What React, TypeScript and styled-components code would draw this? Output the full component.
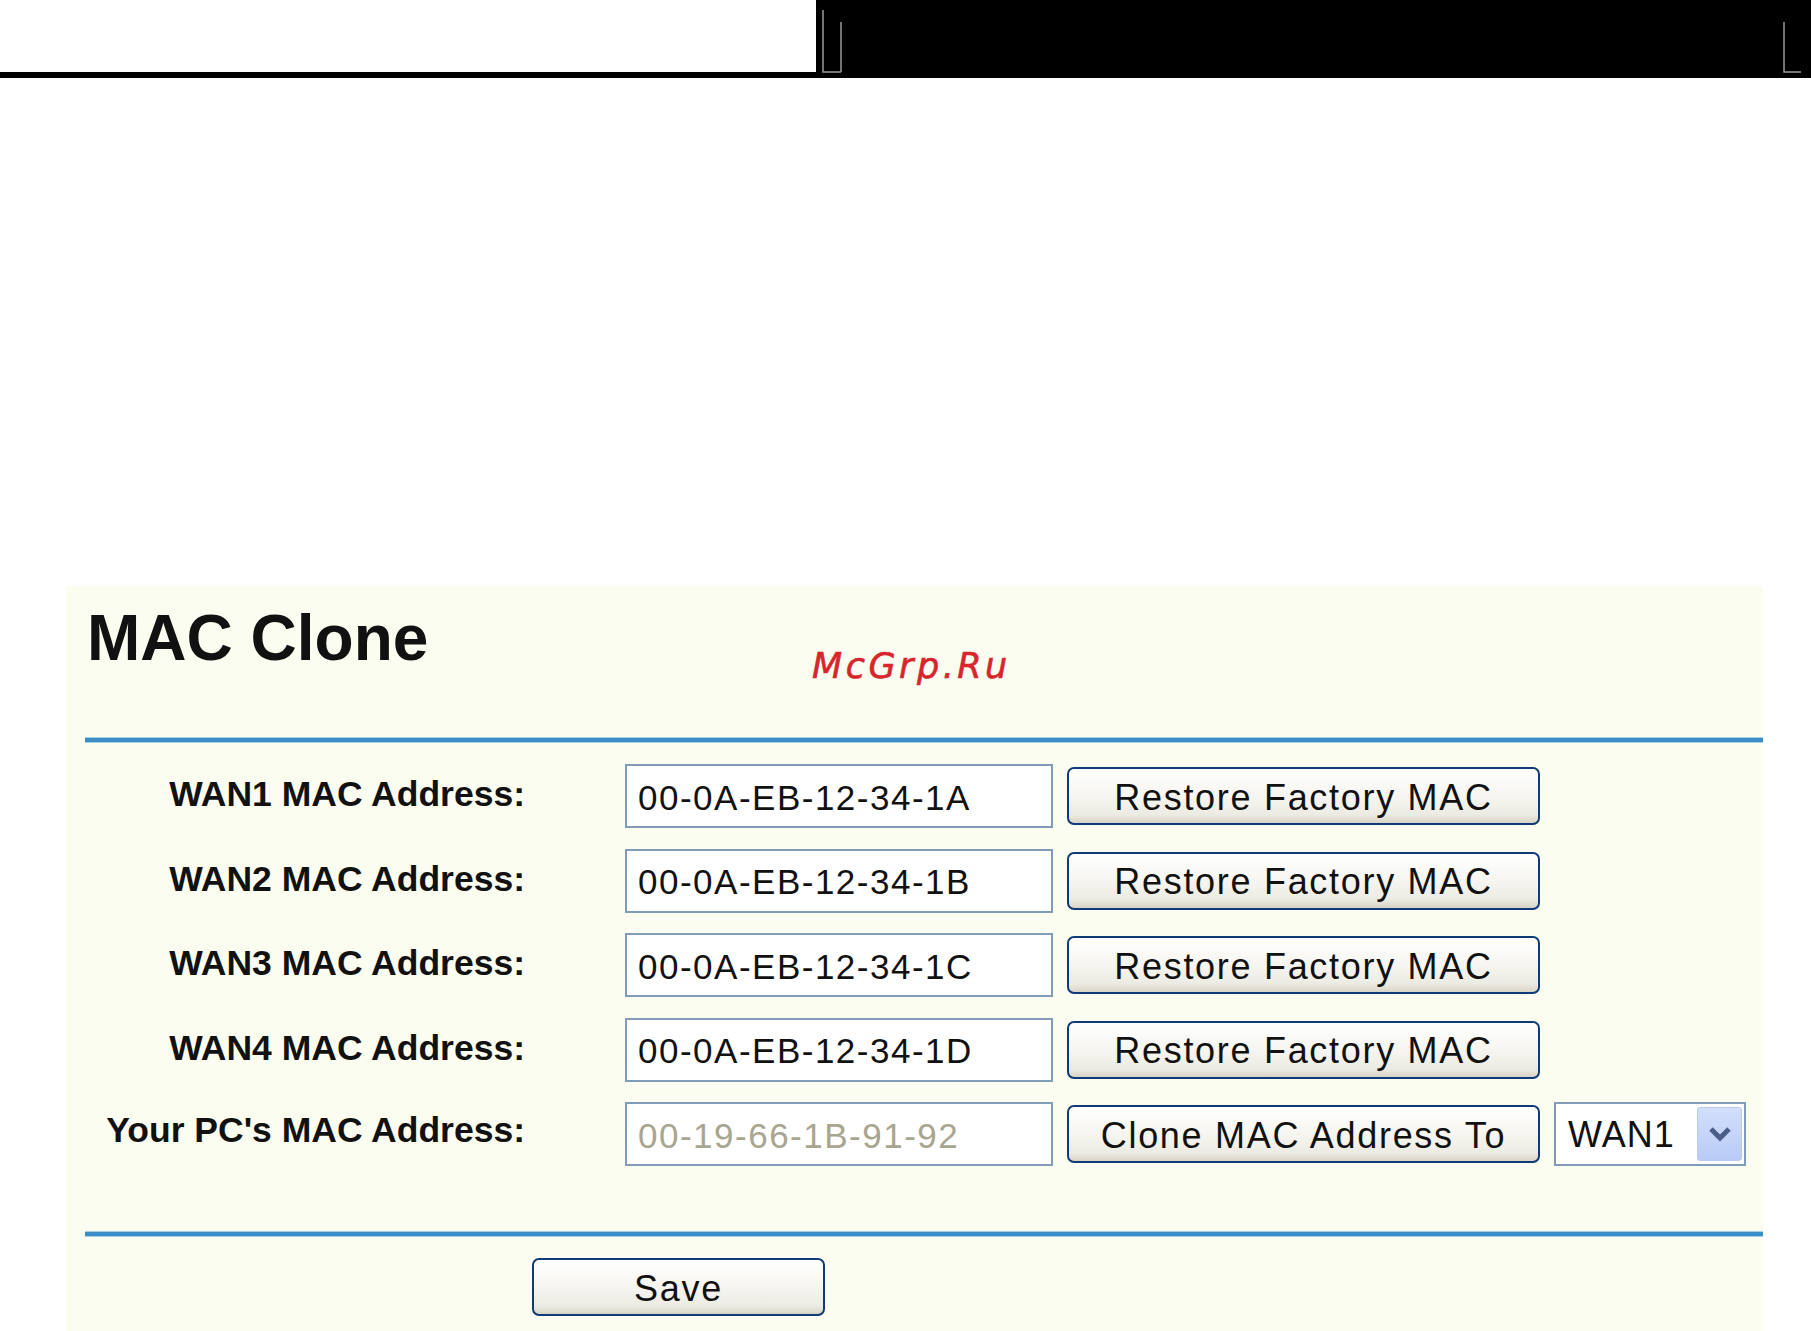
import * as React from 'react';

import styled, { createGlobalStyle } from 'styled-components';

const GlobalStyle = createGlobalStyle`
  html, body {
    margin: 0;
    padding: 0;
    background: #ffffff;
  }
  body {
    width: 1811px;
    height: 1331px;
    overflow: hidden;
    font-family: "Liberation Sans", Arial, sans-serif;
  }
`;

const Header = styled.header`
  display: flex;
  height: 78px;
  background: #000000;
`;

const PageBlank = styled.div`
  width: 816px;
  height: 72px;
  background: #ffffff;
`;

const HeaderBar = styled.div`
  flex: 1;
  display: flex;
`;

const Panel = styled.section`
  position: relative;
  display: flex;
  flex-direction: column;
  margin: 508px 0 0 66px;
  width: 1697px;
  height: 745px;
  padding-top: 20px;
  box-sizing: border-box;
  background: #fbfdf1;
`;

const Title = styled.h1`
  margin: 0 0 0 21px;
  font-size: 64px;
  line-height: 64px;
  font-weight: bold;
  color: #111111;
`;

const Watermark = styled.span`
  position: absolute;
  left: 746px;
  top: 62px;
  font-family: "DejaVu Sans", sans-serif;
  font-style: italic;
  font-size: 35px;
  line-height: 36px;
  letter-spacing: 3.5px;
  color: #d8252b;
  -webkit-text-stroke: 0.6px #d8252b;
`;

const Rule = styled.div<{ $top: number }>`
  margin: ${(p) => p.$top}px 0 0 19px;
  height: 4px;
  background: #3b8ec6;
  border-top: 1px solid #a7cfe8;
  border-bottom: 1px solid #a7cfe8;
`;

const Form = styled.div`
  display: grid;
  grid-template-columns: 545px 428px 473px 192px;
  grid-auto-rows: 64px;
  column-gap: 14px;
  row-gap: 20.5px;
  margin-top: 21px;
`;

const Label = styled.div<{ $lift: number }>`
  align-self: center;
  padding: 0 86px ${(p) => p.$lift}px 0;
  text-align: right;
  font-size: 35.5px;
  line-height: 36px;
  font-weight: bold;
  color: #111111;
  white-space: nowrap;
`;

const TextBox = styled.div<{ $disabled?: boolean }>`
  display: flex;
  align-items: center;
  box-sizing: border-box;
  height: 64px;
  padding: 3px 11px 0;
  border: 2px solid #7f9db9;
  background: #ffffff;
  font-size: 35px;
  letter-spacing: 1.5px;
  color: ${(p) => (p.$disabled ? '#a8a591' : '#111111')};
  white-space: nowrap;
`;

const XpButton = styled.button<{ $width?: number }>`
  align-self: center;
  box-sizing: border-box;
  width: ${(p) => (p.$width ? `${p.$width}px` : '100%')};
  height: 58px;
  padding: 3px 0 0;
  border: 2px solid #0f3c78;
  border-radius: 7px;
  background: linear-gradient(#ffffff 0%, #f7f6f1 45%, #ecebe3 85%, #d8d3c6 100%);
  font-family: "Liberation Sans", Arial, sans-serif;
  font-size: 36px;
  letter-spacing: 1.7px;
  color: #111111;
  white-space: nowrap;
`;

const SelectBox = styled.div`
  display: flex;
  align-items: center;
  justify-content: space-between;
  box-sizing: border-box;
  height: 64px;
  padding: 2px 2px 0 12px;
  border: 2px solid #7f9db9;
  background: #ffffff;
  font-size: 36px;
  letter-spacing: 1px;
  color: #111111;
`;

const DropButton = styled.span`
  display: flex;
  align-items: center;
  justify-content: center;
  width: 45px;
  height: 54px;
  margin-top: -2px;
  border: 1px solid #b9c9ef;
  border-radius: 3px;
  box-sizing: border-box;
  background: linear-gradient(#d3dffb, #b9cbf6);
`;

const SaveRow = styled.div`
  margin: 21px 0 0 466px;
`;

const rows = [
  { label: 'WAN1 MAC Address:', value: '00-0A-EB-12-34-1A' },
  { label: 'WAN2 MAC Address:', value: '00-0A-EB-12-34-1B' },
  { label: 'WAN3 MAC Address:', value: '00-0A-EB-12-34-1C' },
  { label: 'WAN4 MAC Address:', value: '00-0A-EB-12-34-1D' },
];

const HeaderLines = () => (
  <svg width="995" height="78" viewBox="0 0 995 78">
    <g stroke="#9a9a9a" strokeWidth="1.5" fill="none">
      <path d="M7 10 V72 H25" />
      <path d="M25 22 V72" />
      <path d="M968 22 V72 H985" />
    </g>
  </svg>
);

const Chevron = () => (
  <svg width="24" height="16" viewBox="0 0 24 16">
    <polyline
      points="3,3 12,12 21,3"
      fill="none"
      stroke="#4a5e88"
      strokeWidth="5"
      strokeLinejoin="miter"
    />
  </svg>
);

export default function App() {
  return (
    <>
      <GlobalStyle />
      <Header>
        <PageBlank />
        <HeaderBar>
          <HeaderLines />
        </HeaderBar>
      </Header>
      <Panel>
        <Title>MAC Clone</Title>
        <Watermark>McGrp.Ru</Watermark>
        <Rule $top={67} />
        <Form>
          {rows.map((row) => (
            <React.Fragment key={row.label}>
              <Label $lift={4}>{row.label}</Label>
              <TextBox>{row.value}</TextBox>
              <XpButton>Restore Factory MAC</XpButton>
              <div />
            </React.Fragment>
          ))}
          <Label $lift={8}>Your PC's MAC Address:</Label>
          <TextBox $disabled>00-19-66-1B-91-92</TextBox>
          <XpButton>Clone MAC Address To</XpButton>
          <SelectBox>
            WAN1
            <DropButton>
              <Chevron />
            </DropButton>
          </SelectBox>
        </Form>
        <Rule $top={65} />
        <SaveRow>
          <XpButton $width={293}>Save</XpButton>
        </SaveRow>
      </Panel>
    </>
  );
}
